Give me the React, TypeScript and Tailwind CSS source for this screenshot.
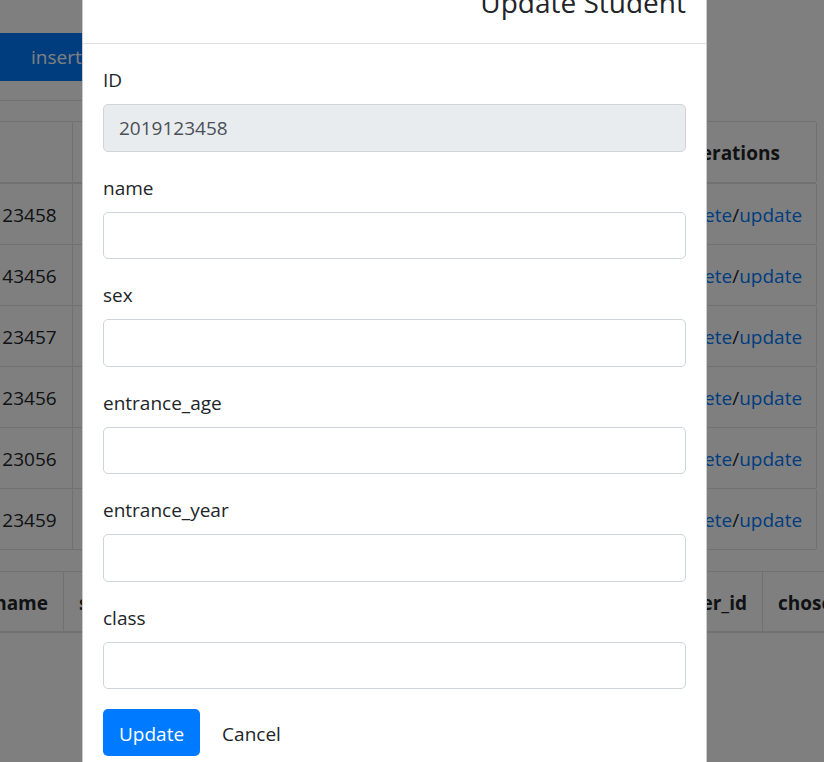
import React from "react";

const ids = ["2019123458", "2019143456", "2019123457", "2019123456", "2019123056", "2019123459"];
const fields = ["name", "sex", "entrance_age", "entrance_year", "class"];

export default function App() {
  return (
    <div className="relative w-[824px] h-[762px] overflow-hidden bg-white font-['Open_Sans',sans-serif] text-[19px] leading-[30px] text-[#212529]">
      {/* background page */}
      <div className="flex flex-col pt-[33px]">
        <div className="flex">
          <div className="ml-[-20px] h-[47.5px] rounded-[5px] bg-[#007bff] pl-[51px] pr-[15px] pt-[1px] flex items-center text-white">
            insert
          </div>
        </div>
        <div className="mt-[19.5px] w-[400px] border-t border-[#dee2e6]" />
        {/* table 1 */}
        <div className="mt-[20px] ml-[-72px] w-[888px] border-t border-l border-[#dee2e6]">
          <div className="grid grid-cols-[144px_589px_155px] h-[62px] border-b-2 border-[#dee2e6] font-bold">
            <div className="flex items-center px-[15px] pt-[2px] border-r border-[#dee2e6]">ID</div>
            <div className="flex items-center px-[15px] pt-[2px] border-r border-[#dee2e6]">name</div>
            <div className="flex items-center px-[15px] pt-[2px] border-r border-[#dee2e6]">operations</div>
          </div>
          {ids.map((id) => (
            <div key={id} className="grid grid-cols-[144px_589px_155px] h-[61px] border-b border-[#dee2e6]">
              <div className="flex items-center pl-[19px] pr-[15px] pt-[2px] border-r border-[#dee2e6]">{id}</div>
              <div className="flex items-center px-[15px] border-r border-[#dee2e6]"></div>
              <div className="flex items-center px-[15px] pt-[2px] border-r border-[#dee2e6] whitespace-nowrap">
                <span className="text-[#007bff]">delete</span>/<span className="text-[#007bff]">update</span>
              </div>
            </div>
          ))}
        </div>
        {/* table 2 */}
        <div className="mt-[21px] ml-[-158px] w-[1100px] border-t border-[#dee2e6]">
          <div className="grid grid-cols-[136px_86px_567px_132px_177px] h-[61px] border-b-2 border-[#dee2e6] font-bold whitespace-nowrap">
            <div className="flex items-center px-[15px] pt-[2px] border-r border-[#dee2e6]">ID</div>
            <div className="flex items-center px-[15px] pt-[2px] border-r border-[#dee2e6] justify-end">name</div>
            <div className="flex items-center px-[15px] pt-[2px] border-r border-[#dee2e6]">sex</div>
            <div className="flex items-center px-[15px] pt-[2px] border-r border-[#dee2e6] justify-end">teacher_id</div>
            <div className="flex items-center px-[15px] pt-[2px] border-r border-[#dee2e6]">chosen_course</div>
          </div>
        </div>
      </div>

      {/* backdrop */}
      <div className="absolute inset-0 bg-black/50" />

      {/* modal */}
      <div className="absolute left-[82px] top-[-37px] w-[625px] bg-white border border-black/20 rounded-[6px]">
        <div className="flex justify-end px-[20px] pt-[20px] pb-[23px] border-b border-[#dee2e6]">
          <h4 className="text-[28px] leading-[36px] font-normal">Update Student</h4>
        </div>
        <div className="px-[20px] pt-[21px] pb-[20px] flex flex-col">
          <div className="flex flex-col mb-[21px]">
            <label className="mb-[9px] pt-[1px] leading-[29px]">ID</label>
            <div className="h-[47.5px] rounded-[5px] border border-[#ced4da] bg-[#e9ecef] px-[15px] pt-[1px] flex items-center text-[#495057]">
              2019123458
            </div>
          </div>
          {fields.map((f, i) => (
            <div key={f} className={"flex flex-col " + (i === fields.length - 1 ? "mb-[19.5px]" : "mb-[21px]")}>
              <label className="mb-[9px] pt-[1px] leading-[29px]">{f}</label>
              <div className="h-[47.5px] rounded-[5px] border border-[#ced4da] bg-white" />
            </div>
          ))}
          <div className="flex items-center">
            <button className="h-[47px] rounded-[5px] bg-[#007bff] px-[16px] pt-[3px] text-white">Update</button>
            <button className="ml-[6px] h-[47px] px-[16px] pt-[3px] text-[#212529]">Cancel</button>
          </div>
        </div>
      </div>
    </div>
  );
}
